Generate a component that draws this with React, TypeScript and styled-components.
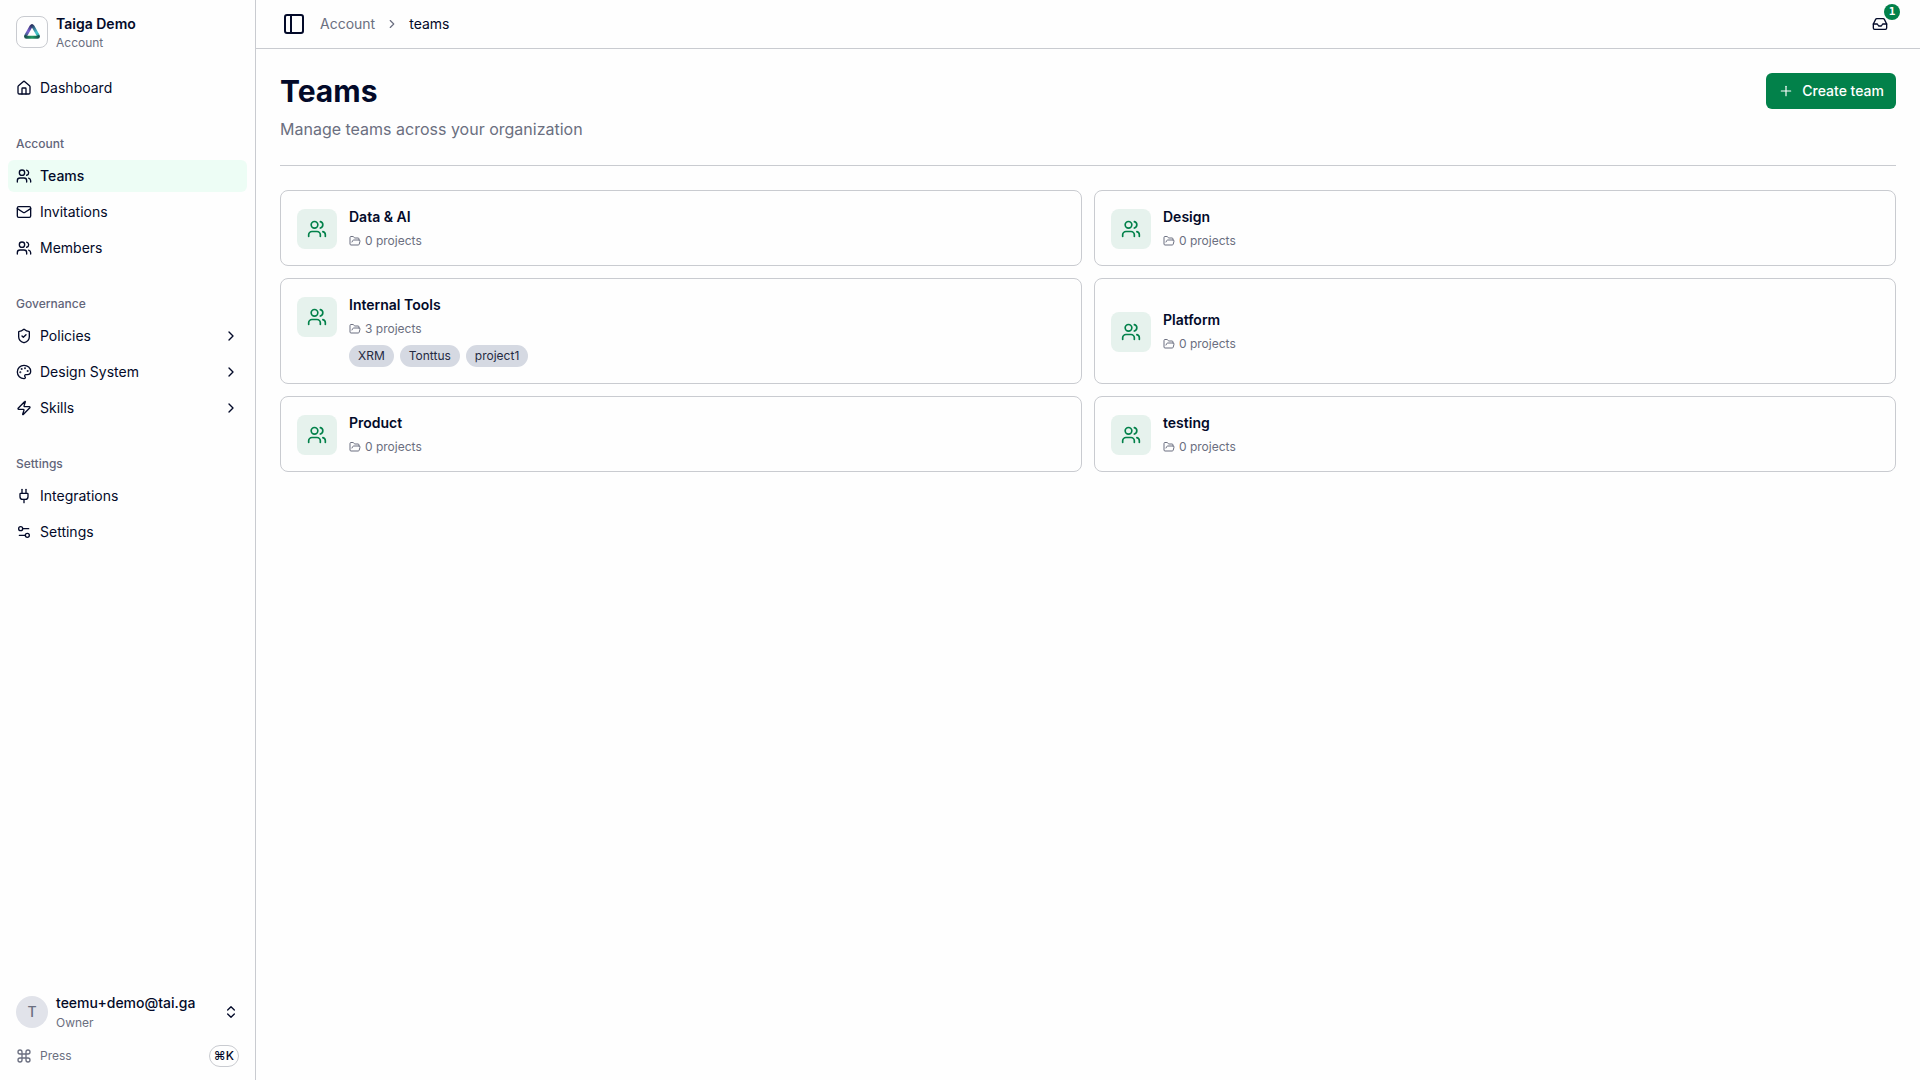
import React from "react";
import styled, { createGlobalStyle } from "styled-components";
import {
  ChevronRight,
  ChevronsUpDown,
  Command,
  FolderOpen,
  House,
  Inbox,
  Mail,
  Palette,
  PanelLeft,
  Plug,
  Plus,
  Settings2,
  ShieldCheck,
  Users,
  Zap,
  type LucideIcon,
} from "lucide-react";

const color = {
  text: "#030a29",
  muted: "#6b6f80",
  border: "#c9cbd0",
  green: "#02814a",
  greenTint: "#e6f2ed",
  active: "#edfdf5",
  tag: "#d5d9e2",
};

const GlobalStyle = createGlobalStyle`
  *, *::before, *::after { box-sizing: border-box; }
  body {
    margin: 0;
    background: #fefefe;
    color: ${color.text};
    font-family: Inter, "Liberation Sans", sans-serif;
    font-size: 14px;
    line-height: 20px;
    -webkit-font-smoothing: antialiased;
  }
  h1, h2, p, ul, ol { margin: 0; padding: 0; }
  ul, ol { list-style: none; }
  a { color: inherit; text-decoration: none; }
  button { font: inherit; color: inherit; background: none; border: 0; padding: 0; cursor: pointer; }
  svg { flex-shrink: 0; display: block; }
`;

const Shell = styled.div`
  display: flex;
  min-height: 100vh;
`;

const Sidebar = styled.aside`
  width: 256px;
  flex-shrink: 0;
  height: 100vh;
  position: sticky;
  top: 0;
  display: flex;
  flex-direction: column;
  border-right: 1px solid ${color.border};
`;

const SidebarEnd = styled.div`
  display: flex;
  flex-direction: column;
  gap: 4px;
  padding: 8px;
`;

const IdentityButton = styled.button`
  display: flex;
  align-items: center;
  gap: 8px;
  height: 48px;
  width: 100%;
  padding: 0 8px;
  text-align: left;
`;

const LogoTile = styled.span`
  display: grid;
  place-items: center;
  width: 32px;
  height: 32px;
  border: 1px solid ${color.border};
  border-radius: 8px;
`;

const Avatar = styled.span`
  display: grid;
  place-items: center;
  width: 32px;
  height: 32px;
  border-radius: 50%;
  background: #e1e3ea;
  color: ${color.muted};
  font-weight: 500;
`;

const IdentityText = styled.span<{ $gap: number }>`
  flex: 1;
  min-width: 0;
  display: flex;
  flex-direction: column;
  gap: ${(p) => p.$gap}px;
`;

const IdentityName = styled.span<{ $weight: number }>`
  font-weight: ${(p) => p.$weight};
`;

const IdentityRole = styled.span`
  font-size: 12px;
  line-height: 16px;
  color: ${color.muted};
`;

const Nav = styled.nav`
  flex: 1;
  display: flex;
  flex-direction: column;
  gap: 8px;
`;

const NavGroup = styled.section`
  padding: 8px;
`;

const GroupLabel = styled.h2`
  padding: 8px;
  font-size: 12px;
  line-height: 16px;
  font-weight: 500;
  color: #62657a;
`;

const NavList = styled.ul`
  display: flex;
  flex-direction: column;
  gap: 4px;
`;

const NavLink = styled.a<{ $active: boolean }>`
  display: flex;
  align-items: center;
  gap: 8px;
  height: 32px;
  padding: 0 8px;
  border-radius: 6px;
  background: ${(p) => (p.$active ? color.active : "transparent")};
  font-weight: ${(p) => (p.$active ? 500 : 400)};
`;

const NavText = styled.span`
  flex: 1;
`;

const PressButton = styled.button`
  display: flex;
  align-items: center;
  gap: 8px;
  height: 32px;
  padding: 0 8px;
  font-size: 12px;
  line-height: 16px;
  color: ${color.muted};
  text-align: left;
`;

const Kbd = styled.kbd`
  padding: 2px 4px;
  border: 1px solid ${color.border};
  border-radius: 11px;
  font: 500 12px/16px Inter, "DejaVu Sans", sans-serif;
  color: ${color.text};
`;

const Main = styled.div`
  flex: 1;
  min-width: 0;
`;

const TopBar = styled.header`
  display: flex;
  align-items: center;
  justify-content: space-between;
  height: 49px;
  padding: 0 24px;
  border-bottom: 1px solid ${color.border};
`;

const TopBarStart = styled.div`
  display: flex;
  align-items: center;
  gap: 12px;
`;

const IconButton = styled.button`
  position: relative;
  display: grid;
  place-items: center;
  width: 28px;
  height: 28px;
`;

const InboxButton = styled(IconButton)`
  width: 32px;
  height: 32px;
`;

const CountBadge = styled.span`
  position: absolute;
  top: -4px;
  right: -4px;
  width: 16px;
  height: 16px;
  border-radius: 50%;
  background: ${color.green};
  color: #fff;
  font: 700 11px/16px "DejaVu Sans Mono", monospace;
  text-align: center;
`;

const Crumbs = styled.ol`
  display: flex;
  align-items: center;
  gap: 10px;
  color: ${color.muted};
`;

const Crumb = styled.li<{ $current?: boolean }>`
  color: ${(p) => (p.$current ? color.text : "inherit")};
`;

const Content = styled.main`
  padding: 24px;
`;

const PageHead = styled.div`
  display: flex;
  align-items: flex-start;
  justify-content: space-between;
  padding-bottom: 24px;
  margin-bottom: 24px;
  border-bottom: 1px solid ${color.border};
`;

const Title = styled.h1`
  font-size: 30px;
  line-height: 36px;
  font-weight: 700;
`;

const Subtitle = styled.p`
  margin-top: 8px;
  font-size: 16px;
  line-height: 24px;
  color: ${color.muted};
`;

const PrimaryButton = styled.button`
  display: flex;
  align-items: center;
  gap: 8px;
  height: 36px;
  padding: 0 12px;
  border-radius: 6px;
  background: ${color.green};
  color: #fff;
  font-weight: 500;
`;

const TeamGrid = styled.ul`
  display: grid;
  grid-template-columns: repeat(2, minmax(0, 1fr));
  gap: 12px;
`;

const TeamItem = styled.li`
  display: grid;
`;

const TeamCard = styled.a`
  display: flex;
  align-items: center;
  padding: 16px;
  border: 1px solid ${color.border};
  border-radius: 8px;
`;

const TeamBody = styled.div`
  display: flex;
  align-items: flex-start;
  gap: 12px;
`;

const TeamIcon = styled.span`
  display: grid;
  place-items: center;
  width: 40px;
  height: 40px;
  margin-top: 2px;
  border-radius: 8px;
  background: ${color.greenTint};
  color: ${color.green};
`;

const TeamName = styled.h2`
  font-size: 14px;
  line-height: 20px;
  font-weight: 600;
`;

const ProjectCount = styled.p`
  display: flex;
  align-items: center;
  gap: 4px;
  margin-top: 6px;
  font-size: 12px;
  line-height: 16px;
  color: ${color.muted};
`;

const TagList = styled.ul`
  display: flex;
  gap: 6px;
  margin-top: 8px;
`;

const Tag = styled.li`
  padding: 3px 9px;
  border-radius: 11px;
  background: ${color.tag};
  color: #252b42;
  font-size: 12px;
  line-height: 16px;
`;

type NavEntry = { label: string; icon: LucideIcon; active?: boolean; expandable?: boolean };

const navGroups: { title?: string; entries: NavEntry[] }[] = [
  { entries: [{ label: "Dashboard", icon: House }] },
  {
    title: "Account",
    entries: [
      { label: "Teams", icon: Users, active: true },
      { label: "Invitations", icon: Mail },
      { label: "Members", icon: Users },
    ],
  },
  {
    title: "Governance",
    entries: [
      { label: "Policies", icon: ShieldCheck, expandable: true },
      { label: "Design System", icon: Palette, expandable: true },
      { label: "Skills", icon: Zap, expandable: true },
    ],
  },
  {
    title: "Settings",
    entries: [
      { label: "Integrations", icon: Plug },
      { label: "Settings", icon: Settings2 },
    ],
  },
];

const teams: { name: string; projects: string[] }[] = [
  { name: "Data & AI", projects: [] },
  { name: "Design", projects: [] },
  { name: "Internal Tools", projects: ["XRM", "Tonttus", "project1"] },
  { name: "Platform", projects: [] },
  { name: "Product", projects: [] },
  { name: "testing", projects: [] },
];

function Logo() {
  return (
    <svg width="18" height="18" viewBox="0 0 18 18" fill="none" strokeWidth="3" strokeLinecap="round" aria-hidden="true">
      <defs>
        <linearGradient id="logo-left" x1="9" y1="2" x2="2" y2="15" gradientUnits="userSpaceOnUse">
          <stop offset="0" stopColor="#2b2a5e" />
          <stop offset="0.5" stopColor="#7a62d0" />
          <stop offset="1" stopColor="#1d5a5c" />
        </linearGradient>
        <linearGradient id="logo-right" x1="9" y1="2" x2="16" y2="15" gradientUnits="userSpaceOnUse">
          <stop offset="0" stopColor="#27305f" />
          <stop offset="0.6" stopColor="#48c6cd" />
          <stop offset="1" stopColor="#1c8f86" />
        </linearGradient>
        <linearGradient id="logo-base" x1="2" y1="15" x2="16" y2="15" gradientUnits="userSpaceOnUse">
          <stop offset="0" stopColor="#1c4a4c" />
          <stop offset="0.5" stopColor="#1f9a62" />
          <stop offset="1" stopColor="#14524f" />
        </linearGradient>
      </defs>
      <path d="M9 2.8Q8.3 2.8 7.9 3.6L2.7 12.8" stroke="url(#logo-left)" />
      <path d="M9 2.8Q9.7 2.8 10.1 3.6L15.3 12.8" stroke="url(#logo-right)" />
      <path d="M2.6 13.6Q2.6 14.3 3.4 14.3L14.6 14.3Q15.4 14.3 15.4 13.6" stroke="url(#logo-base)" />
    </svg>
  );
}

export default function App() {
  return (
    <>
      <GlobalStyle />
      <Shell>
        <Sidebar>
          <SidebarEnd>
            <IdentityButton type="button">
              <LogoTile>
                <Logo />
              </LogoTile>
              <IdentityText $gap={1}>
                <IdentityName $weight={600}>Taiga Demo</IdentityName>
                <IdentityRole>Account</IdentityRole>
              </IdentityText>
            </IdentityButton>
          </SidebarEnd>
          <Nav>
            {navGroups.map((group, i) => (
              <NavGroup key={i}>
                {group.title && <GroupLabel>{group.title}</GroupLabel>}
                <NavList>
                  {group.entries.map(({ label, icon: Icon, active, expandable }) => (
                    <li key={label}>
                      <NavLink href="#" $active={!!active} aria-current={active ? "page" : undefined}>
                        <Icon size={16} />
                        <NavText>{label}</NavText>
                        {expandable && <ChevronRight size={16} />}
                      </NavLink>
                    </li>
                  ))}
                </NavList>
              </NavGroup>
            ))}
          </Nav>
          <SidebarEnd>
            <IdentityButton type="button">
              <Avatar>T</Avatar>
              <IdentityText $gap={2}>
                <IdentityName $weight={500}>teemu+demo@tai.ga</IdentityName>
                <IdentityRole>Owner</IdentityRole>
              </IdentityText>
              <ChevronsUpDown size={16} />
            </IdentityButton>
            <PressButton type="button">
              <Command size={16} />
              <NavText>Press</NavText>
              <Kbd>⌘K</Kbd>
            </PressButton>
          </SidebarEnd>
        </Sidebar>
        <Main>
          <TopBar>
            <TopBarStart>
              <IconButton type="button" aria-label="Toggle sidebar">
                <PanelLeft size={24} />
              </IconButton>
              <nav aria-label="Breadcrumb">
                <Crumbs>
                  <Crumb>
                    <a href="#">Account</a>
                  </Crumb>
                  <Crumb aria-hidden="true">
                    <ChevronRight size={14} />
                  </Crumb>
                  <Crumb $current aria-current="page">
                    teams
                  </Crumb>
                </Crumbs>
              </nav>
            </TopBarStart>
            <InboxButton type="button" aria-label="Inbox">
              <Inbox size={16} />
              <CountBadge>1</CountBadge>
            </InboxButton>
          </TopBar>
          <Content>
            <PageHead>
              <div>
                <Title>Teams</Title>
                <Subtitle>Manage teams across your organization</Subtitle>
              </div>
              <PrimaryButton type="button">
                <Plus size={16} strokeWidth={1.75} />
                Create team
              </PrimaryButton>
            </PageHead>
            <TeamGrid>
              {teams.map((team) => (
                <TeamItem key={team.name}>
                  <TeamCard href="#">
                    <TeamBody>
                      <TeamIcon>
                        <Users size={20} />
                      </TeamIcon>
                      <div>
                        <TeamName>{team.name}</TeamName>
                        <ProjectCount>
                          <FolderOpen size={12} />
                          {team.projects.length} projects
                        </ProjectCount>
                        {team.projects.length > 0 && (
                          <TagList>
                            {team.projects.map((name) => (
                              <Tag key={name}>{name}</Tag>
                            ))}
                          </TagList>
                        )}
                      </div>
                    </TeamBody>
                  </TeamCard>
                </TeamItem>
              ))}
            </TeamGrid>
          </Content>
        </Main>
      </Shell>
    </>
  );
}
